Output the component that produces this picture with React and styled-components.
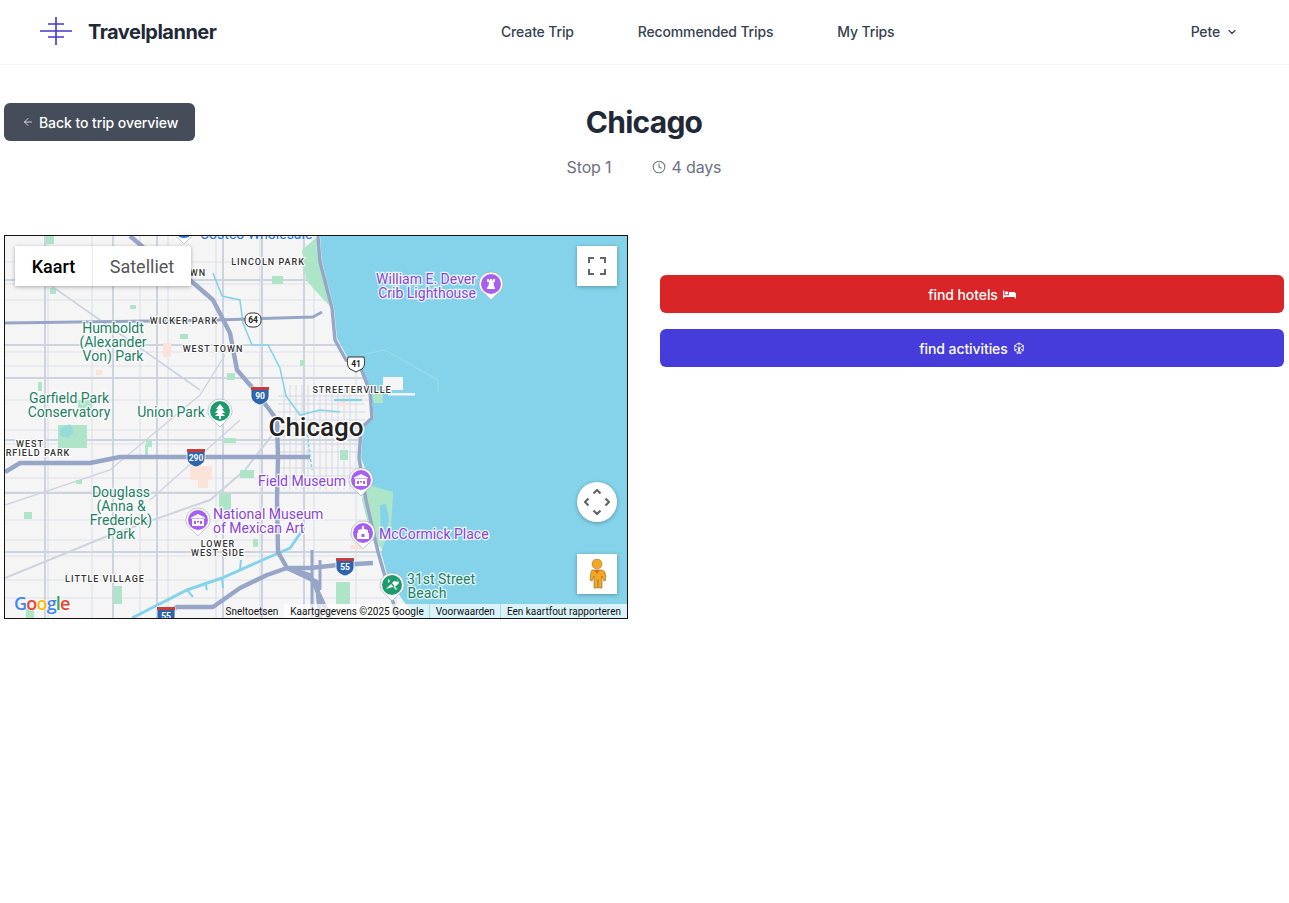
import React from "react";
import styled, { createGlobalStyle } from "styled-components";
import { ArrowLeft, Clock, ChevronDown, FerrisWheel } from "lucide-react";
import { FaBed } from "react-icons/fa";

const Global = createGlobalStyle`
  html, body { margin: 0; padding: 0; background: #fff; }
  body { font-family: Inter, "Liberation Sans", sans-serif; color: #1f2937; }
  * { box-sizing: border-box; }
`;

const Header = styled.header`
  display: grid;
  grid-template-columns: 461px auto 1fr;
  align-items: center;
  height: 65px;
  padding: 0 51px 0 40px;
  background: #fff;
  border-bottom: 1px solid #f3f4f6;
`;
const Brand = styled.div`
  display: flex;
  align-items: center;
  gap: 16px;
`;
const BrandName = styled.span`
  font-size: 20px;
  font-weight: 700;
  letter-spacing: -0.5px;
  color: #1f2937;
`;
const Nav = styled.nav`
  display: flex;
  gap: 64px;
`;
const NavLink = styled.a`
  font-size: 14px;
  font-weight: 500;
  letter-spacing: -0.15px;
  line-height: 20px;
  color: #374151;
`;
const UserMenu = styled.div`
  justify-self: end;
  display: flex;
  align-items: center;
  gap: 6px;
  font-size: 14px;
  font-weight: 500;
  line-height: 20px;
  letter-spacing: -0.15px;
  color: #374151;
`;
const Main = styled.main`
  width: 1280px;
  margin: 0 0 0 4px;
  padding-top: 38px;
`;
const TitleRow = styled.div`
  display: grid;
  grid-template-columns: 1fr auto 1fr;
  align-items: center;
  height: 38px;
`;
const BackButton = styled.button`
  justify-self: start;
  display: flex;
  align-items: center;
  gap: 5px;
  height: 38px;
  padding: 0 17px 0 18px;
  border: 0;
  border-radius: 6px;
  background: #464d5a;
  color: #fff;
  font: 500 14px Inter, sans-serif;
  letter-spacing: -0.08px;
`;
const Title = styled.h1`
  margin: 0;
  font-size: 30px;
  font-weight: 700;
  line-height: 38px;
  letter-spacing: -0.75px;
  color: #1f2937;
`;
const Meta = styled.div`
  display: flex;
  justify-content: center;
  gap: 41px;
  margin-top: 14px;
  font-size: 16px;
  line-height: 24px;
  letter-spacing: -0.15px;
  color: #6b7280;
`;
const MetaItem = styled.span`
  display: flex;
  align-items: center;
  gap: 5px;
`;
const Columns = styled.section`
  display: grid;
  grid-template-columns: 1fr 1fr;
  gap: 32px;
  margin-top: 56px;
`;
const MapFrame = styled.div`
  position: relative;
  height: 384px;
  border: 1px solid #1a1014;
  overflow: hidden;
  background: #f5f5f5;
  font-family: Roboto, sans-serif;
`;
const MapArt = styled.svg`
  display: block;
  width: 622px;
  height: 382px;
  font-family: Roboto, sans-serif;
`;
const GreenText = styled.text`
  font-size: 14px;
  fill: #237f63;
  text-anchor: middle;
  stroke: #fff;
  stroke-width: 2.5px;
  stroke-opacity: 0.8;
  paint-order: stroke;
`;
const PurpleText = styled.text`
  font-size: 14px;
  fill: #8a45d6;
  text-anchor: ${(p) => p.$anchor || "start"};
  stroke: #fff;
  stroke-width: 2.5px;
  stroke-opacity: 0.85;
  paint-order: stroke;
`;
const DistrictText = styled.text`
  font-size: 9px;
  font-weight: 500;
  letter-spacing: 1px;
  fill: #333;
  text-anchor: middle;
  stroke: #fff;
  stroke-width: 2px;
  paint-order: stroke;
`;
const CityText = styled.text`
  font-size: 26px;
  font-weight: 500;
  fill: #222;
  text-anchor: middle;
  stroke: #fff;
  stroke-width: 3px;
  paint-order: stroke;
`;
const ShieldText = styled.text`
  font-size: 8.5px;
  font-weight: 700;
  text-anchor: middle;
  fill: ${(p) => p.$fill || "#fff"};
`;
const GoogleText = styled.text`
  font-family: "Open Sans", sans-serif;
  font-size: 18px;
  font-weight: 600;
  letter-spacing: -0.8px;
  stroke: #fff;
  stroke-width: 1.5px;
  stroke-opacity: 0.6;
  paint-order: stroke;
`;
const MapTypes = styled.div`
  position: absolute;
  top: 10px;
  left: 10px;
  display: flex;
  height: 40px;
  background: #fff;
  box-shadow: 0 1px 4px rgba(0, 0, 0, 0.3);
`;
const MapType = styled.div`
  display: flex;
  align-items: center;
  justify-content: center;
  width: ${(p) => p.$width}px;
  font-size: 18px;
  font-weight: ${(p) => (p.$active ? 500 : 400)};
  color: ${(p) => (p.$active ? "#000" : "#565656")};
  border-right: ${(p) => (p.$active ? "1px solid #ebebeb" : "0")};
`;
const Control = styled.div`
  position: absolute;
  right: 10px;
  top: ${(p) => p.$top}px;
  display: flex;
  align-items: center;
  justify-content: center;
  width: 40px;
  height: 40px;
  background: #fff;
  border-radius: ${(p) => (p.$round ? "50%" : "0")};
  box-shadow: 0 1px 4px rgba(0, 0, 0, 0.3);
`;
const Attribution = styled.div`
  position: absolute;
  right: 0;
  bottom: 0;
  display: flex;
  height: 14px;
  align-items: stretch;
  font-size: 10px;
  line-height: 15px;
  color: #111;
`;
const AttrPlain = styled.span`
  padding: 0 6px 0 6px;
  white-space: nowrap;
`;
const AttrCell = styled.span`
  padding: 0 ${(p) => p.$right ?? 6}px 0 6px;
  background: rgba(255, 255, 255, 0.7);
  white-space: nowrap;
  border-left: ${(p) => (p.$edge ? "0" : "1px solid #a9d6e6")};
`;
const Actions = styled.div`
  display: flex;
  flex-direction: column;
  gap: 16px;
  padding-top: 40px;
`;
const ActionButton = styled.button`
  display: flex;
  align-items: center;
  justify-content: center;
  gap: 5px;
  height: 38px;
  border: 0;
  border-radius: 6px;
  background: ${(p) => p.$bg};
  color: #fff;
  font: 500 14px Inter, sans-serif;
  letter-spacing: -0.08px;
`;

const Logo = () => (
  <svg width="32" height="30" viewBox="0 0 32 30" fill="none" stroke="#4338ca" strokeWidth="1.6">
    <path d="M16 0v28M0 14h32M8 7h16M8 20h16" />
  </svg>
);

const verticals = [24, 46, 70, 84, 108, 130, 157, 178, 198, 220, 240, 262, 290, 300, 312];
const horizontals = [262, 284, 300, 352, 366, 378, 400, 430, 444, 478, 492, 520, 540, 556, 580, 598];
const arterialV = [45, 113, 157, 223, 262, 304];
const arterialH = [280, 345, 378, 440, 493, 552];
const loopV = [284, 290, 296, 302, 308, 314, 320, 326, 332, 338, 344, 350];
const loopH = [396, 404, 412, 420, 428, 436, 444, 452, 468, 476];
const parks = [
  [58, 425, 29, 23], [46, 236, 8, 8], [50, 288, 6, 6], [272, 276, 11, 8], [227, 373, 8, 7], [38, 382, 4, 9],
  [24, 512, 8, 7], [76, 480, 6, 4], [146, 440, 6, 7], [219, 494, 12, 18], [240, 470, 14, 8], [253, 539, 5, 8],
  [224, 438, 12, 5], [114, 586, 8, 18], [26, 607, 8, 12], [336, 582, 14, 22], [300, 360, 5, 6], [180, 334, 8, 5],
  [78, 400, 14, 9], [340, 450, 8, 10], [130, 305, 6, 4], [145, 445, 3, 10],
];
const pinks = [[163, 343, 8, 14], [190, 466, 22, 14], [198, 478, 10, 10], [340, 400, 6, 6], [350, 545, 12, 4], [96, 370, 6, 5]];

const Pin = ({ x, y, color, children }) => (
  <g transform={`translate(${x} ${y})`}>
    <path d="M-12 0a12 12 0 1 1 24 0c0 6-4 8-7 11l-5 5-5-5c-3-3-7-5-7-11z" fill="#fff" stroke="#9aa4ae" strokeWidth="0.6" />
    <circle r="10" fill={color} />
    {children}
  </g>
);

const Interstate = ({ x, y, label }) => (
  <g transform={`translate(${x} ${y})`}>
    <path d="M-9-8h18v9c0 5-5 8-9 9-4-1-9-4-9-9z" fill="#2f64ad" stroke="#fff" strokeWidth="0.8" />
    <path d="M-9-8h18v3h-18z" fill="#c93a3a" />
    <ShieldText y="4" $fill="#fff">{label}</ShieldText>
  </g>
);

const MapDrawing = () => (
  <MapArt viewBox="5 236 622 382">
    <rect x="5" y="236" width="622" height="382" fill="#f5f5f6" />
    <g stroke="#dde1e9" strokeWidth="1.2" fill="none">
      {verticals.map((x) => <path key={x} d={`M${x * 2} 236V618`} />)}
      {horizontals.map((y) => <path key={y} d={`M5 ${y}H420`} />)}
    </g>
    <g stroke="#cdd4e0" strokeWidth="2" fill="none">
      {arterialV.map((x) => <path key={x} d={`M${x} 236V618`} />)}
      {arterialH.map((y) => <path key={y} d={`M5 ${y}H400`} />)}
      <path d="M5 578L110 535 210 500 245 470 280 425" />
      <path d="M5 505L110 470 200 395 225 355" strokeWidth="1.4" />
      <path d="M50 285L200 390" strokeWidth="1.6" />
      <path d="M150 500L240 420" strokeWidth="1.4" />
    </g>
    <g stroke="#d5d9e2" strokeWidth="1" fill="none">
      {loopV.map((x) => <path key={x} d={`M${x} 385V490`} />)}
      {loopH.map((y) => <path key={y} d={`M278 ${y}H365`} />)}
    </g>
    {parks.map(([x, y, w, h]) => <rect key={`${x}-${y}`} x={x} y={y} width={w} height={h} fill="#aee5c8" />)}
    {pinks.map(([x, y, w, h]) => <rect key={`${x}-${y}`} x={x} y={y} width={w} height={h} fill="#fbe3da" />)}
    <path d="M302 250L318 236 321 262 332 308 320 296 306 280z" fill="#ade5c9" />
    <path d="M332 308L352 308 340 314z" fill="#f3e6c9" />
    <path d="M366 470L393 492 392 525 383 550 372 540 362 500z" fill="#ade5c9" />
    <path d="M380 505l6-1 3 14-2 14-6 2z" fill="#84d3ea" />
    <path d="M60 428l10-4 4 8-6 6-8-2z" fill="#84d3ea" opacity="0.6" />
    <path
      d="M320 236L322 262 334 308 337 338 348 358 361 364 371 392 374 418 363 428 361 458 372 486 393 492 391 526 381 552 388 578 404 602 418 618H627V236z"
      fill="#84d3ea"
    />
    <path d="M383 377H403V390H383z" fill="#f5f5f6" />
    <path d="M388 393H415V395.500H388z" fill="#f5f5f6" />
    <path d="M371 392L383 388V403H374z" fill="#ade5c9" />
    <path d="M360 355L385 350 438 380V392" fill="none" stroke="#a6dff0" strokeWidth="0.8" />
    <g fill="none" stroke="#84d3ea" strokeWidth="1.6">
      <path d="M213 273L222 296 240 300 243 323 252 345 268 345 280 368 286 396 300 415 320 410 340 412" />
      <path d="M334 400H362" strokeWidth="2.4" />
      <path d="M302 415L308 440 312 470" strokeDasharray="3 2" />
    </g>
    <g fill="none" stroke="#84d3ea" strokeWidth="3">
      <path d="M132 618L187 590 222 578 258 562 290 548 304 528" />
      <path d="M187 590l6 7M205 582l2 8M222 578l1 10M240 570l1 -10" strokeWidth="2" />
    </g>
    <g fill="none" stroke="#97a6c6" strokeWidth="4.4" strokeLinejoin="round">
      <path d="M5 323L150 321 217 320 313 317 322 312" strokeWidth="3" />
      <path d="M130 236L143 247 190 280 213 300 230 333 237 370 257 393 277 420 278 458 277 500 278 552 287 568 317 582 320 618" />
      <path d="M5 472L20 463 90 463 120 457 197 457 310 457" />
      <path d="M157 618L177 607 213 607 240 588 267 575 287 568 310 568 338 565 373 563" />
      <path d="M287 568L310 575 330 618" />
      <path d="M318 236L320 262 332 308 335 340 346 360 360 366 370 392 372 418 361 428 359 458 366 500 378 552 386 580 398 618" strokeWidth="3.4" />
      <path d="M312 550V618M320 590V560" strokeWidth="3" />
    </g>

    <DistrictText x="268" y="265">LINCOLN PARK</DistrictText>
    <DistrictText x="198" y="276">WN</DistrictText>
    <DistrictText x="184" y="324">WICKER PARK</DistrictText>
    <DistrictText x="213" y="352">WEST TOWN</DistrictText>
    <DistrictText x="352" y="393">STREETERVILLE</DistrictText>
    <DistrictText x="30" y="447">WEST</DistrictText>
    <DistrictText x="38" y="456">RFIELD PARK</DistrictText>
    <DistrictText x="218" y="547">LOWER</DistrictText>
    <DistrictText x="218" y="556">WEST SIDE</DistrictText>
    <DistrictText x="105" y="582">LITTLE VILLAGE</DistrictText>

    <GreenText x="113" y="333">Humboldt</GreenText>
    <GreenText x="113" y="347">(Alexander</GreenText>
    <GreenText x="113" y="361">Von) Park</GreenText>
    <GreenText x="69" y="403">Garfield Park</GreenText>
    <GreenText x="69" y="417">Conservatory</GreenText>
    <GreenText x="171" y="417">Union Park</GreenText>
    <GreenText x="121" y="497">Douglass</GreenText>
    <GreenText x="121" y="511">(Anna &amp;</GreenText>
    <GreenText x="121" y="525">Frederick)</GreenText>
    <GreenText x="121" y="539">Park</GreenText>
    <GreenText x="441" y="584">31st Street</GreenText>
    <GreenText x="427" y="598">Beach</GreenText>

    <PurpleText x="476" y="284" $anchor="end">William E. Dever</PurpleText>
    <PurpleText x="476" y="298" $anchor="end">Crib Lighthouse</PurpleText>
    <PurpleText x="346" y="486" $anchor="end">Field Museum</PurpleText>
    <PurpleText x="213" y="519">National Museum</PurpleText>
    <PurpleText x="213" y="533">of Mexican Art</PurpleText>
    <PurpleText x="379" y="539">McCormick Place</PurpleText>
    <text x="200" y="239" fill="#1a73e8" fontSize="14">Costco Wholesale</text>

    <CityText x="316" y="436">Chicago</CityText>

    <g transform="translate(253 320)">
      <rect x="-8" y="-7" width="16" height="14" rx="6" fill="#fff" stroke="#333" />
      <ShieldText y="3" $fill="#222">64</ShieldText>
    </g>
    <g transform="translate(356 364)">
      <path d="M-8-7h16c1 5 1 9-2 12l-6 3-6-3c-3-3-3-7-2-12z" fill="#fff" stroke="#333" />
      <ShieldText y="3" $fill="#222">41</ShieldText>
    </g>
    <Interstate x={260} y={395} label="90" />
    <Interstate x={196} y={457} label="290" />
    <Interstate x={166} y={615} label="55" />
    <Interstate x={345} y={566} label="55" />

    <Pin x={184} y={228} color="#1a73e8" />
    <Pin x={220} y={411} color="#1f9a6d">
      <path d="M0-7l4 5h-2l3 4h-3l3 3H1v3h-2V5h-4l3-3h-3l3-4h-2z" fill="#fff" />
    </Pin>
    <Pin x={491} y={284} color="#a85ff0">
      <path d="M-4-5h2v1.5h1V-5h2v1.5h1V-5h2v3h-1.5l.5 4H3l1 2v1h-8V4l1-2h.5l.5-4H-4z" fill="#fff" />
    </Pin>
    <Pin x={361} y={480} color="#a85ff0">
      <path d="M0-6l7 3.5v1h-14v-1zM-6-1h12v7h-12z" fill="#fff" />
      <path d="M-4 1h2v3h-2zM2 1h2v3h-2zM-1 1h2v1.5h-2z" fill="#a85ff0" />
    </Pin>
    <Pin x={198} y={520} color="#a85ff0">
      <path d="M0-6l7 3.5v1h-14v-1zM-6-1h12v7h-12z" fill="#fff" />
      <path d="M-4 1h2v3h-2zM2 1h2v3h-2zM-1 1h2v1.5h-2z" fill="#a85ff0" />
    </Pin>
    <Pin x={363} y={533} color="#a85ff0">
      <path d="M-1-7h2v3l4 1v3h1v6h-12V0h1v-3l4-1z" fill="#fff" />
      <path d="M-1.5 1h3v3h-3z" fill="#a85ff0" />
    </Pin>
    <Pin x={392} y={585} color="#1f9a6d">
      <path d="M-6 4L2-4l4 1-1-4 2 5-3 3zM-1-1l5 6 1-1-5-6zM-4-6l2 2-2 2z" fill="#fff" />
    </Pin>

    <GoogleText x="14" y="610">
      <tspan fill="#4285f4">G</tspan>
      <tspan fill="#ea4335">o</tspan>
      <tspan fill="#fbbc05">o</tspan>
      <tspan fill="#4285f4">g</tspan>
      <tspan fill="#34a853">l</tspan>
      <tspan fill="#ea4335">e</tspan>
    </GoogleText>
  </MapArt>
);

export default function App() {
  return (
    <>
      <Global />
      <Header>
        <Brand>
          <Logo />
          <BrandName>Travelplanner</BrandName>
        </Brand>
        <Nav>
          <NavLink>Create Trip</NavLink>
          <NavLink>Recommended Trips</NavLink>
          <NavLink>My Trips</NavLink>
        </Nav>
        <UserMenu>
          Pete
          <ChevronDown size={12} strokeWidth={2.5} />
        </UserMenu>
      </Header>
      <Main>
        <TitleRow>
          <BackButton>
            <ArrowLeft size={12} strokeWidth={1.5} />
            Back to trip overview
          </BackButton>
          <Title>Chicago</Title>
        </TitleRow>
        <Meta>
          <MetaItem>Stop 1</MetaItem>
          <MetaItem>
            <Clock size={14} strokeWidth={1.75} />4 days
          </MetaItem>
        </Meta>
        <Columns>
          <MapFrame>
            <MapDrawing />
            <MapTypes>
              <MapType $active $width={78}>Kaart</MapType>
              <MapType $width={98}>Satelliet</MapType>
            </MapTypes>
            <Control $top={10}>
              <svg width="18" height="18" viewBox="0 0 18 18" fill="none" stroke="#666" strokeWidth="2">
                <path d="M1 6V1h5M12 1h5v5M17 12v5h-5M6 17H1v-5" />
              </svg>
            </Control>
            <Control $top={246} $round>
              <svg width="26" height="26" viewBox="0 0 26 26" fill="none" stroke="#666" strokeWidth="2.2">
                <path d="M9.500 4.500L13 1l3.500 3.500M21.500 9.500L25 13l-3.500 3.500M16.500 21.500L13 25l-3.500-3.500M4.500 16.500L1 13l3.500-3.500" />
              </svg>
            </Control>
            <Control $top={318}>
              <svg width="18" height="30" viewBox="0 0 18 30">
                <circle cx="9" cy="5" r="5" fill="#f5a623" stroke="#8a6a20" strokeWidth="0.5" />
                <path d="M4 11h10l3 2 1 8-2 1-2-5v12h-3.500v-8h-1v8H6V17l-2 5-2-1 1-8z" fill="#f5a623" stroke="#8a6a20" strokeWidth="0.6" />
                <path d="M6 11h6l-3 4z" fill="#e2682a" />
              </svg>
            </Control>
            <Attribution>
              <AttrPlain>Sneltoetsen</AttrPlain>
              <AttrCell $edge $right={5}>Kaartgegevens ©2025 Google</AttrCell>
              <AttrCell $right={5}>Voorwaarden</AttrCell>
              <AttrCell>Een kaartfout rapporteren</AttrCell>
            </Attribution>
          </MapFrame>
          <Actions>
            <ActionButton $bg="#d92428">
              find hotels <FaBed size={13} />
            </ActionButton>
            <ActionButton $bg="#463bdb">
              find activities <FerrisWheel size={12} strokeWidth={2} />
            </ActionButton>
          </Actions>
        </Columns>
      </Main>
    </>
  );
}
